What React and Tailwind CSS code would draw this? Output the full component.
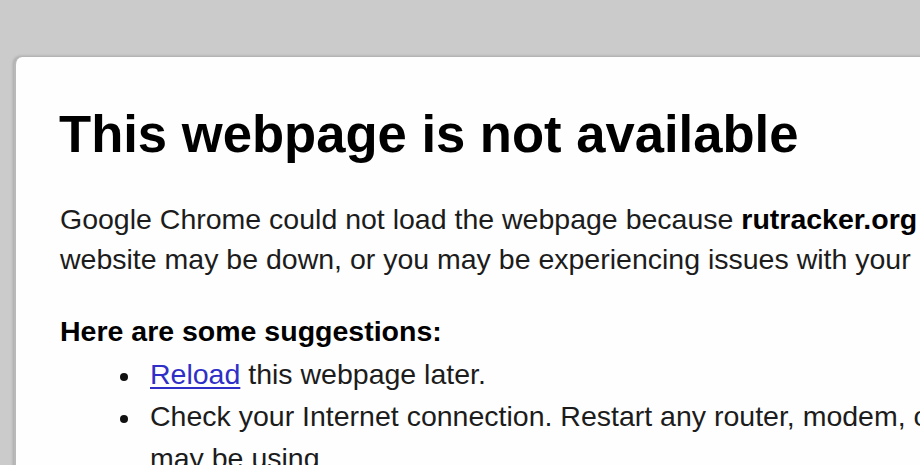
export default function App() {
  return (
    <div
      className="w-[920px] h-[465px] overflow-hidden bg-[#cbcbcb] pt-[57px] pl-[14px]"
      style={{ fontFamily: '"Liberation Sans", Arial, sans-serif' }}
    >
      <div className="w-[1000px] h-[500px] bg-[#fefefe] rounded-tl-[8px] shadow-[-1px_-1px_3px_rgba(0,0,0,0.18)] border-l-2 border-[#b9b9b9] pl-[43px] pt-[47px]">
        <h1 className="text-[52.6px] leading-[60px] font-bold text-black whitespace-nowrap">
          This webpage is not available
        </h1>
        <div className="mt-[35px] pl-[1px] text-[28.5px] leading-[40px] text-[#1c1c1c] whitespace-nowrap">
          <p>
            Google Chrome could not load the webpage because <b className="text-black">rutracker.org</b> took too long to respond. The
          </p>
          <p>website may be down, or you may be experiencing issues with your Internet connection.</p>
        </div>
        <h2 className="mt-[32px] pl-[1px] text-[28.5px] leading-[40px] font-bold text-black whitespace-nowrap">
          Here are some suggestions:
        </h2>
        <ul className="mt-[2px] pl-[61px] text-[28.5px] leading-[42px] text-[#1c1c1c]">
          <li className="flex items-start">
            <span className="h-[42px] w-[30px] shrink-0 flex items-center pt-[5px]">
              <span className="block w-[8px] h-[8px] rounded-full bg-[#111]" />
            </span>
            <span className="whitespace-nowrap">
              <a href="#" className="text-[#2f2fc8] underline underline-offset-[3px]">Reload</a> this webpage later.
            </span>
          </li>
          <li className="flex items-start">
            <span className="h-[42px] w-[30px] shrink-0 flex items-center pt-[5px]">
              <span className="block w-[8px] h-[8px] rounded-full bg-[#111]" />
            </span>
            <span className="whitespace-nowrap">
              Check your Internet connection. Restart any router, modem, or other network devices you
              <br />
              may be using.
            </span>
          </li>
        </ul>
      </div>
    </div>
  );
}
